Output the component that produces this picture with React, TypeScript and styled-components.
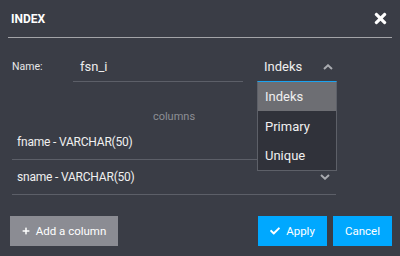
import React from "react";
import styled, { createGlobalStyle } from "styled-components";
import { FaTimes, FaCheck, FaPlus } from "react-icons/fa";

const Global = createGlobalStyle`
  html, body { margin: 0; padding: 0; background: #3a3d46; }
  body { font-family: Roboto, "Liberation Sans", sans-serif; color: #ececec; }
  * { box-sizing: border-box; }
`;

const Dialog = styled.div`
  width: 400px;
  height: 256px;
  background: #3a3d46;
  padding: 0 8px;
  display: flex;
  flex-direction: column;
  position: relative;
`;

const Header = styled.div`
  height: 38px;
  border-bottom: 1px solid #a3a4a8;
  display: flex;
  align-items: center;
  justify-content: space-between;
  padding: 0 3px 0 3px;
`;

const Title = styled.div`
  font-weight: 700;
  font-size: 12px;
  color: #ffffff;
`;

const Close = styled.div`
  color: #fff;
  display: flex;
`;

const Body = styled.div`
  width: 324px;
  margin-left: 4px;
  display: flex;
  flex-direction: column;
`;

const NameRow = styled.div`
  display: flex;
  align-items: flex-end;
  margin-top: 13px;
  height: 31px;
`;

const Label = styled.div`
  width: 61px;
  font-size: 10.5px;
  align-self: center;
  color: #e8e8e8;
`;

const Input = styled.div`
  width: 170px;
  height: 31px;
  border-bottom: 1px solid #5c5f68;
  padding-left: 7px;
  display: flex;
  align-items: center;
  font-size: 13px;
`;

const SelectWrap = styled.div`
  margin-left: 14px;
  width: 79px;
  height: 31px;
  position: relative;
`;

const Select = styled.div`
  height: 100%;
  display: flex;
  align-items: center;
  justify-content: space-between;
  padding: 0 3px 0 7px;
  font-size: 13px;
  color: #f0f0f0;
`;

const Chevron = ({ up }: { up?: boolean }) => (
  <svg width="10" height="6" viewBox="0 0 10 6">
    <polyline
      points={up ? "1,5 5,1.3 9,5" : "1,1 5,4.7 9,1"}
      fill="none"
      stroke="#a9abb0"
      strokeWidth="2"
    />
  </svg>
);

const Menu = styled.div`
  position: absolute;
  top: 30px;
  left: 0;
  width: 80px;
  background: #30323a;
  border: 1px solid #5d6068;
  border-top: 1px solid #1aa3f0;
  z-index: 2;
`;

const MenuItem = styled.div<{ $active?: boolean }>`
  height: 29.4px;
  display: flex;
  align-items: center;
  padding-left: 7px;
  font-size: 13px;
  color: #f0f0f0;
  background: ${(p) => (p.$active ? "#6d6e73" : "transparent")};
`;

const ColumnsLabel = styled.div`
  margin-top: 26px;
  text-align: center;
  font-size: 11px;
  color: #8d8f95;
  height: 17px;
  line-height: 17px;
`;

const ColumnRow = styled.div`
  height: 35px;
  border-bottom: 1px solid #5c5f68;
  display: flex;
  align-items: center;
  justify-content: space-between;
  padding: 0 6px 0 5px;
  font-size: 12px;
  letter-spacing: -0.2px;
  color: #f0f0f0;
`;

const Footer = styled.div`
  margin-top: auto;
  margin-bottom: 10px;
  display: flex;
  align-items: center;
  gap: 6px;
  padding-left: 2px;
`;

const Button = styled.button<{ $variant: "gray" | "blue"; $width: number }>`
  width: ${(p) => p.$width}px;
  height: 30px;
  border: none;
  padding: 0;
  display: flex;
  align-items: center;
  justify-content: center;
  gap: 6px;
  font-family: inherit;
  font-size: 11.5px;
  color: #ffffff;
  background: ${(p) => (p.$variant === "gray" ? "#8b8c93" : "#00a8ff")};
`;

const Spacer = styled.div`
  flex: 1;
`;

export default function App() {
  return (
    <>
      <Global />
      <Dialog>
        <Header>
          <Title>INDEX</Title>
          <Close>
            <FaTimes size={17} />
          </Close>
        </Header>
        <Body>
          <NameRow>
            <Label>Name:</Label>
            <Input>fsn_i</Input>
            <SelectWrap>
              <Select>
                Indeks
                <Chevron up />
              </Select>
              <Menu>
                <MenuItem $active>Indeks</MenuItem>
                <MenuItem>Primary</MenuItem>
                <MenuItem>Unique</MenuItem>
              </Menu>
            </SelectWrap>
          </NameRow>
          <ColumnsLabel>columns</ColumnsLabel>
          <ColumnRow>
            fname - VARCHAR(50)
            <Chevron />
          </ColumnRow>
          <ColumnRow>
            sname - VARCHAR(50)
            <Chevron />
          </ColumnRow>
        </Body>
        <Footer>
          <Button $variant="gray" $width={108}>
            <FaPlus size={8} />
            Add a column
          </Button>
          <Spacer />
          <Button $variant="blue" $width={69}>
            <FaCheck size={10} />
            Apply
          </Button>
          <Button $variant="blue" $width={59}>
            Cancel
          </Button>
        </Footer>
      </Dialog>
    </>
  );
}
